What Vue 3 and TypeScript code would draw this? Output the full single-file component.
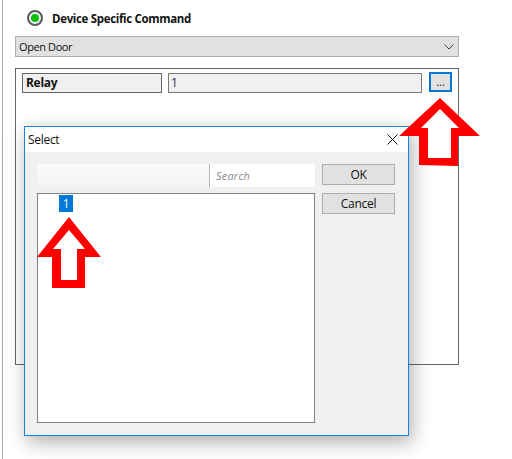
<template>
  <div class="page">
    <div class="radio-row">
      <span class="radio"><span class="radio-dot"></span></span>
      <span class="radio-label">Device Specific Command</span>
    </div>
    <div class="combo">
      <span>Open Door</span>
      <svg class="combo-arrow" width="10" height="6" viewBox="0 0 10 6">
        <path d="M0.5 0.5 L5 5 L9.5 0.5" fill="none" stroke="#444" stroke-width="1" />
      </svg>
    </div>
    <div class="panel">
      <div class="param-row">
        <div class="param-name">Relay</div>
        <div class="param-value">{{ relay }}</div>
        <button class="browse">...</button>
      </div>
    </div>

    <div class="dialog">
      <div class="titlebar">
        <span>Select</span>
        <svg class="close" width="11" height="11" viewBox="0 0 11 11">
          <path d="M0.5 0.5 L10.5 10.5 M10.5 0.5 L0.5 10.5" stroke="#111" stroke-width="1" fill="none" />
        </svg>
      </div>
      <div class="dialog-body">
        <div class="left-col">
          <div class="search-strip">
            <div class="search-box">Search</div>
          </div>
          <div class="list">
            <span class="list-item">{{ relay }}</span>
          </div>
        </div>
        <div class="buttons">
          <button class="btn">OK</button>
          <button class="btn">Cancel</button>
        </div>
      </div>
    </div>

    <svg class="arrow arrow-browse" width="82" height="70" viewBox="0 0 82 70">
      <path :d="browseArrow" fill="#fff" />
      <path :d="browseArrow + browseInner" fill="#f00" fill-rule="evenodd" />
    </svg>
    <svg class="arrow arrow-list" width="66" height="72" viewBox="0 0 66 72">
      <path :d="listInner" fill="#fff" />
      <path :d="listArrow + listInner" fill="#f00" fill-rule="evenodd" />
    </svg>
  </div>
</template>

<script setup lang="ts">
const relay = '1'

// arrows are drawn relative to their own svg box
const browseArrow = 'M41 0 L81 38 L59 38 L59 68 L20 67 L20 38 L0 38 Z'
const browseInner = ' M41 11 L22 30 L29 30 L29 60 L52 60 L52 30 L60 30 Z'
const listArrow = 'M32 0 L64 40 L48 40 L48 71 L15 71 L15 40 L0 40 Z'
const listInner = ' M32 13 L16 32 L24 32 L24 63 L40 63 L40 32 L48 32 Z'
</script>

<style>
html,
body {
  background: #fff;
}
</style>

<style scoped>
.page {
  position: relative;
  width: 509px;
  height: 459px;
  margin-left: 2px;
  padding: 0 0 0 12px;
  box-sizing: border-box;
  border-left: 1px solid #a9a9a9;
  font-family: "Open Sans", "Noto Sans", sans-serif;
  font-size: 12px;
  letter-spacing: -0.3px;
  color: #111;
  overflow: hidden;
}

.radio-row {
  display: flex;
  align-items: center;
  height: 36px;
  padding-left: 12px;
  gap: 9px;
}

.radio {
  display: flex;
  align-items: center;
  justify-content: center;
  width: 16px;
  height: 16px;
  box-sizing: border-box;
  border: 2px solid #5a5a5a;
  border-radius: 50%;
  background: #f4f4f4;
}

.radio-dot {
  width: 8px;
  height: 8px;
  border-radius: 50%;
  background: #0bbf0b;
}

.radio-label {
  font-weight: 700;
  font-size: 11.5px;
  letter-spacing: -0.33px;
}

.combo {
  display: flex;
  align-items: center;
  justify-content: space-between;
  width: 444px;
  height: 21px;
  box-sizing: border-box;
  padding: 0 4px 0 3px;
  font-size: 11px;
  letter-spacing: -0.4px;
  background: #e1e1e1;
  border: 1px solid #adadad;
}

.panel {
  width: 444px;
  height: 297px;
  margin-top: 11px;
  box-sizing: border-box;
  padding: 4px 6px;
  border: 1px solid #666;
}

.param-row {
  display: flex;
  align-items: flex-start;
}

.param-name {
  width: 140px;
  height: 20px;
  box-sizing: border-box;
  padding-left: 3px;
  line-height: 18px;
  font-weight: 700;
  background: #f0f0f0;
  border: 1px solid #666;
}

.param-value {
  width: 254px;
  height: 20px;
  margin-left: 6px;
  box-sizing: border-box;
  padding-left: 2px;
  line-height: 18px;
  color: #3d1a5b;
  background: #f0f0f0;
  border: 1px solid #7a7a7a;
}

.browse {
  width: 23px;
  height: 20px;
  margin: -1px 0 0 7px;
  padding: 0;
  font-family: inherit;
  font-size: 11px;
  line-height: 14px;
  color: #222;
  background: #e1e1e1;
  border: 2px solid #0078d7;
}

.dialog {
  position: absolute;
  left: 21px;
  top: 126px;
  width: 385px;
  height: 310px;
  box-sizing: border-box;
  border: 1px solid #1883d7;
  background: #f0f0f0;
  box-shadow: 3px 6px 18px rgba(0, 0, 0, 0.32);
}

.titlebar {
  display: flex;
  align-items: center;
  justify-content: space-between;
  height: 25px;
  padding: 0 10px 0 3px;
  background: #fff;
}

.dialog-body {
  display: flex;
  padding: 12px 13px 0 12px;
}

.left-col {
  width: 278px;
}

.search-strip {
  display: flex;
  justify-content: flex-end;
  height: 23px;
  margin-bottom: 6px;
  background: linear-gradient(#fbfbfb, #f3f3f3);
  border-radius: 2px 2px 0 0;
}

.search-box {
  width: 106px;
  height: 23px;
  box-sizing: border-box;
  padding-left: 6px;
  line-height: 23px;
  font-size: 11px;
  font-style: italic;
  letter-spacing: 0.2px;
  color: #8a8a8a;
  background: #fff;
  border-left: 1px solid #b5b5b5;
  background-clip: padding-box;
}

.list {
  height: 230px;
  box-sizing: border-box;
  padding: 1px 0 0 21px;
  background: #fff;
  border: 1px solid #82828c;
}

.list-item {
  display: block;
  width: 14px;
  height: 17px;
  line-height: 17px;
  text-align: center;
  color: #fff;
  background: #0078d7;
}

.buttons {
  display: flex;
  flex-direction: column;
  gap: 8px;
  margin-left: 7px;
}

.btn {
  width: 73px;
  height: 21px;
  padding: 0;
  font-family: inherit;
  font-size: 12px;
  letter-spacing: inherit;
  color: #111;
  background: #e1e1e1;
  border: 1px solid #adadad;
}

.arrow {
  position: absolute;
}

.arrow-browse {
  left: 396px;
  top: 98px;
}

.arrow-list {
  left: 34px;
  top: 217px;
}
</style>
